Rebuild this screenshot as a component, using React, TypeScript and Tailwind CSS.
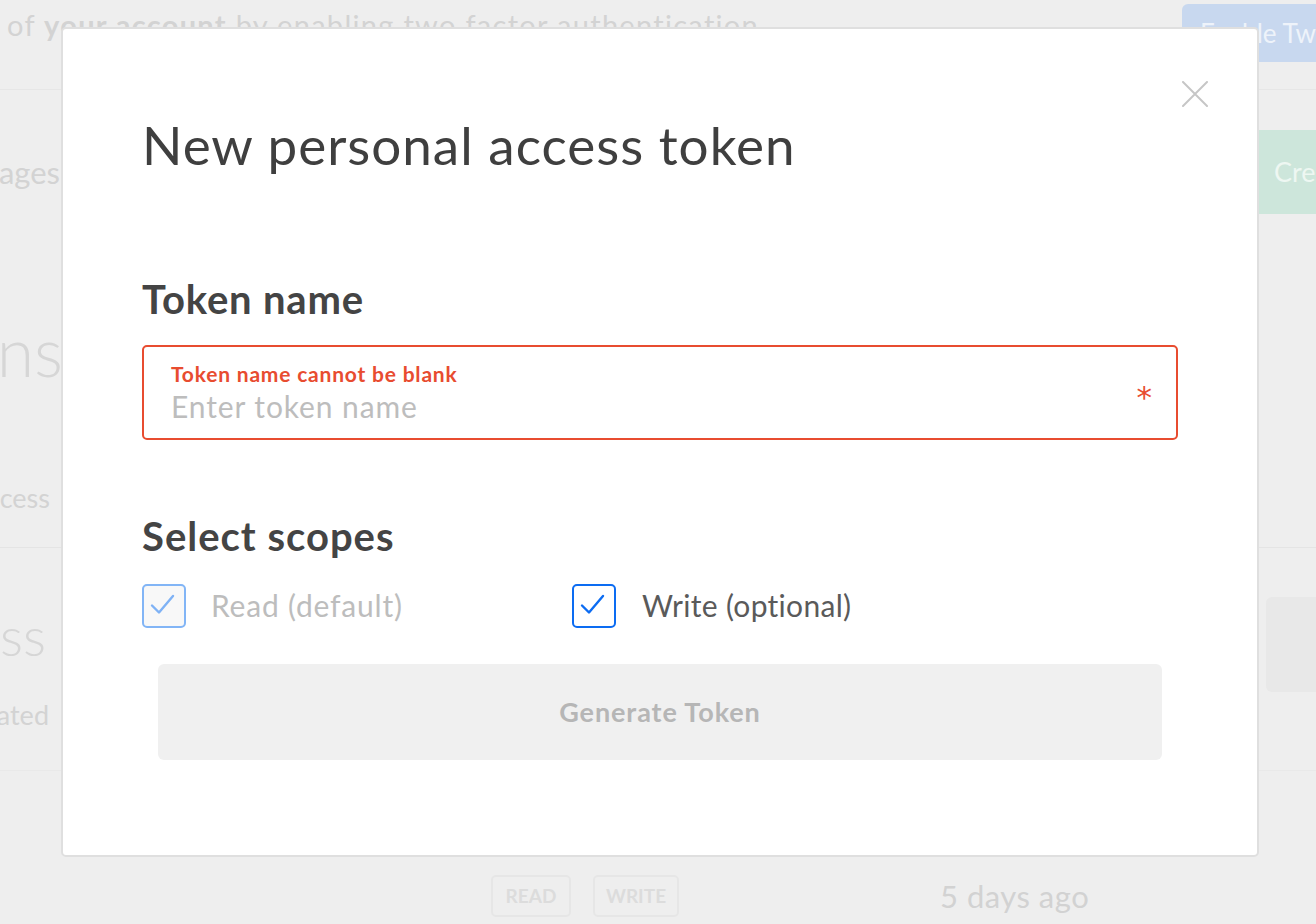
import React from "react";

function Check({ color }: { color: string }) {
  return (
    <svg width="40" height="40" viewBox="0 0 40 40" fill="none">
      <polyline
        points="8,19.5 15,26.5 29,10"
        stroke={color}
        strokeWidth="2.4"
        strokeLinecap="round"
        strokeLinejoin="round"
      />
    </svg>
  );
}

function BackgroundPage() {
  return (
    <div className="flex flex-col text-[#d3d3d3]">
      <div className="h-[90px] flex justify-between items-start border-b border-[#e6e6e6]">
        <p className="pl-[7px] pt-[9px] text-[29px] leading-[32px] tracking-[1.3px] whitespace-nowrap">
          of <span className="font-bold">your account</span> by enabling two factor authentication
        </p>
        <div className="mt-[4px] w-[134px] h-[58px] bg-[#c8d8ef] rounded-tl-[6px] rounded-bl-[6px] pl-[18px] flex items-center text-[#eef3fa] text-[26px] whitespace-nowrap overflow-hidden">
          Enable Two-Factor
        </div>
      </div>

      <div className="h-[164px] flex justify-between items-center">
        <div className="w-[60px] flex justify-end whitespace-nowrap text-[31px]">your messages</div>
        <div className="w-[57px] h-[84px] bg-[#cde6db] flex items-center pl-[15px] text-[27px] text-[#eef7f2] whitespace-nowrap overflow-hidden">
          Create
        </div>
      </div>

      <div className="flex flex-col border-b border-[#e4e4e4] pb-[34px]">
        <div className="mt-[64px] w-[63px] flex justify-end whitespace-nowrap text-[68px] leading-[66px] font-light text-[#d6d6d6]">
          Tokens
        </div>
        <div className="mt-[99px] w-[50px] flex justify-end whitespace-nowrap text-[27px] leading-[30px]">
          Personal access
        </div>
      </div>

      <div className="flex justify-between items-start h-[223px] border-b border-[#e9e9e9]">
        <div className="flex flex-col">
          <div className="mt-[60px] w-[46px] flex justify-end whitespace-nowrap text-[54px] leading-[56px] font-light text-[#d6d6d6]">
            Access
          </div>
          <div className="mt-[36px] w-[49px] flex justify-end whitespace-nowrap text-[27px] leading-[30px]">
            Generated
          </div>
        </div>
        <div className="mt-[49px] w-[50px] h-[95px] bg-[#e8e8e8] rounded-l-[6px]" />
      </div>

      <div className="mt-[104px] h-[42px] flex items-center">
        <div className="ml-[491px] w-[80px] h-[42px] border-2 border-[#e6e6e6] rounded-[5px] flex items-center justify-center text-[19px] font-bold text-[#dcdcdc]">
          READ
        </div>
        <div className="ml-[22px] w-[86px] h-[42px] border-2 border-[#e6e6e6] rounded-[5px] flex items-center justify-center text-[19px] font-bold text-[#dcdcdc]">
          WRITE
        </div>
        <div className="ml-[261px] text-[31px] tracking-[0.5px] text-[#d2d2d2] whitespace-nowrap">5 days ago</div>
      </div>
    </div>
  );
}

function TokenModal() {
  return (
    <div className="absolute left-[61px] top-[27px] w-[1198px] h-[830px] bg-white border-2 border-[#dfdfdf] rounded-[5px] px-[79px] text-[#3f3f3f]">
      <div className="flex justify-between items-start">
        <h1 className="mt-[85px] text-[53px] leading-[62px] tracking-[1px] font-normal whitespace-nowrap">
          New personal access token
        </h1>
        <button className="mt-[52px] -mr-[30px] w-[26px] h-[26px] flex items-center justify-center">
          <svg width="26" height="26" viewBox="0 0 26 26" fill="none">
            <path d="M1 1L25 25M25 1L1 25" stroke="#c6c6c6" strokeWidth="2" strokeLinecap="round" />
          </svg>
        </button>
      </div>

      <h2 className="mt-[99px] text-[40px] leading-[48px] tracking-[0.8px] font-bold text-[#444444]">Token name</h2>

      <div className="mt-[22px] h-[95px] border-2 border-[#e84c30] rounded-[5px] pl-[27px] pr-[22px] flex items-center justify-between">
        <div className="flex flex-col">
          <span className="text-[21px] leading-[24px] tracking-[0.8px] font-bold text-[#e84c30]">Token name cannot be blank</span>
          <span className="mt-[2px] text-[30px] leading-[36px] tracking-[0.9px] text-[#bdbdbd]">Enter token name</span>
        </div>
        <span className="mr-[2px] mt-[10px] text-[31px] leading-[31px] text-[#e84c30] font-['DejaVu_Sans',sans-serif]">*</span>
      </div>

      <h2 className="mt-[72px] text-[40px] leading-[48px] tracking-[1px] font-bold text-[#444444]">Select scopes</h2>

      <div className="mt-[23px] flex items-center">
        <label className="w-[430px] flex items-center">
          <span className="w-[44px] h-[44px] border-2 border-[#82b5f6] bg-[#f8f8f8] rounded-[5px] flex items-center justify-center">
            <Check color="#7fb2f5" />
          </span>
          <span className="ml-[25px] text-[30px] tracking-[0.8px] text-[#bdbdbd]">Read (default)</span>
        </label>
        <label className="flex items-center">
          <span className="w-[44px] h-[44px] border-2 border-[#0c6cf2] bg-white rounded-[5px] flex items-center justify-center">
            <Check color="#0c6cf2" />
          </span>
          <span className="ml-[26px] text-[30px] tracking-[0.3px] text-[#5a5a5a]">Write (optional)</span>
        </label>
      </div>

      <button className="mt-[36px] mx-[16px] w-[1004px] h-[96px] bg-[#f0f0f0] rounded-[6px] text-[27px] tracking-[0.9px] font-bold text-[#b6b6b6]">
        Generate Token
      </button>
    </div>
  );
}

export default function App() {
  return (
    <div className="relative w-[1316px] h-[924px] overflow-hidden bg-[#eeeeee] font-['Lato',sans-serif]">
      <BackgroundPage />
      <TokenModal />
    </div>
  );
}
